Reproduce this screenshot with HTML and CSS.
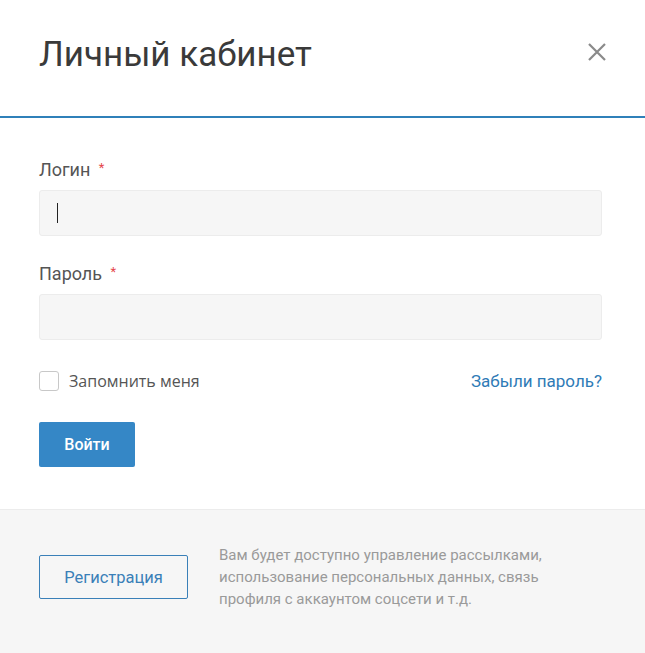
FILE: index.html
```html
<!DOCTYPE html>
<html lang="ru">
<head>
  <meta charset="UTF-8">
  <title>Личный кабинет</title>
  <meta name="viewport" content="width=device-width, initial-scale=1.0">
  <link rel="stylesheet" href="styles.css">
</head>
<body>
  <div class="modal">
    <div class="modal-header">
      <div class="modal-title">Личный кабинет</div>
      <button class="modal-close" type="button" aria-label="Закрыть">
        <svg viewBox="0 0 20 20" width="20" height="20">
          <path d="M2,2 L18,18 M18,2 L2,18" stroke="#8a8a8a" stroke-width="2.2" fill="none"/>
        </svg>
      </button>
    </div>

    <form class="modal-body">
      <div class="field">
        <label class="field-label" for="login">Логин <span class="req">*</span></label>
        <div class="field-box">
          <input class="field-input" id="login" type="text">
          <!-- fake caret, the real one blinks -->
          <span class="caret"></span>
        </div>
      </div>

      <div class="field">
        <label class="field-label" for="password">Пароль <span class="req">*</span></label>
        <div class="field-box">
          <input class="field-input" id="password" type="password">
        </div>
      </div>

      <div class="options">
        <label class="remember">
          <span class="checkbox"></span>
          Запомнить меня
        </label>
        <a class="forgot" href="#">Забыли пароль?</a>
      </div>

      <button class="btn-login" type="button">Войти</button>
    </form>

    <div class="modal-footer">
      <a class="btn-register" href="#">Регистрация</a>
      <div class="footer-note">
        Вам будет доступно управление рассылками,<br>
        использование персональных данных, связь<br>
        профиля с аккаунтом соцсети и т.д.
      </div>
    </div>
  </div>
</body>
</html>
```

FILE: styles.css
```css
body {
  margin: 0;
  background: #f6f6f6;
  font-family: Roboto, 'Noto Sans', Arial, sans-serif;
  color: #555;
}

.modal {
  background: #fff;
}

.modal-header {
  display: flex;
  justify-content: space-between;
  align-items: flex-start;
  height: 116px;
  padding: 0 39px;
  border-bottom: 2px solid #2f80b9;
}

.modal-title {
  margin-top: 35px;
  font-size: 35px;
  line-height: 40px;
  font-weight: 400;
  color: #3a3a3a;
}

.modal-close {
  margin-top: 42px;
  margin-right: -1px;
  padding: 0;
  border: 0;
  background: none;
  width: 20px;
  height: 20px;
  cursor: pointer;
}
.modal-close svg {
  display: block;
}

.modal-body {
  display: flex;
  flex-direction: column;
  padding: 42px 43px 42px 39px;
  margin: 0;
}

.field {
  margin-bottom: 28px;
}

.field-label {
  display: block;
  height: 20px;
  font-size: 18px;
  line-height: 20px;
  margin-bottom: 10px;
  color: #555;
}
.req {
  color: #e5474c;
  font-size: 13px;
  line-height: 1;
  margin-left: 4px;
  vertical-align: 4px;
}

.field-box {
  position: relative;
}

.field-input {
  display: block;
  box-sizing: border-box;
  width: 100%;
  height: 46px;
  margin: 0;
  padding: 0 18px;
  background: #f6f6f6;
  border: 1px solid #ececec;
  border-radius: 3px;
  font-family: inherit;
  font-size: 16px;
  outline: none;
}

.caret {
  position: absolute;
  left: 18px;
  top: 13px;
  width: 1px;
  height: 20px;
  background: #222;
}

.options {
  display: flex;
  justify-content: space-between;
  align-items: center;
  margin-top: 2px;
  height: 22px;
}

.remember {
  display: flex;
  align-items: center;
  gap: 10px;
  font-family: 'Open Sans', Arial, sans-serif;
  font-size: 16px;
  color: #555;
  cursor: pointer;
}
.checkbox {
  box-sizing: border-box;
  width: 20px;
  height: 20px;
  border: 1px solid #c8c8c8;
  border-radius: 3px;
  background: #fff;
}

.forgot {
  font-size: 17px;
  color: #2f7bb6;
  text-decoration: none;
}

.btn-login {
  align-self: flex-start;
  margin-top: 30px;
  width: 96px;
  height: 45px;
  border: 0;
  border-radius: 2px;
  background: #3587c6;
  color: #fff;
  font-family: inherit;
  font-size: 16px;
  font-weight: 500;
  cursor: pointer;
}

.modal-footer {
  display: flex;
  align-items: center;
  gap: 31px;
  padding: 34px 39px 42px;
  background: #f6f6f6;
  border-top: 1px solid #ececec;
}

.btn-register {
  display: flex;
  align-items: center;
  justify-content: center;
  box-sizing: border-box;
  width: 149px;
  height: 44px;
  border: 1px solid #3a80b8;
  border-radius: 2px;
  color: #3a80b8;
  font-size: 16.5px;
  text-decoration: none;
}

.footer-note {
  font-size: 15px;
  line-height: 22px;
  color: #9a9a9a;
}
```
